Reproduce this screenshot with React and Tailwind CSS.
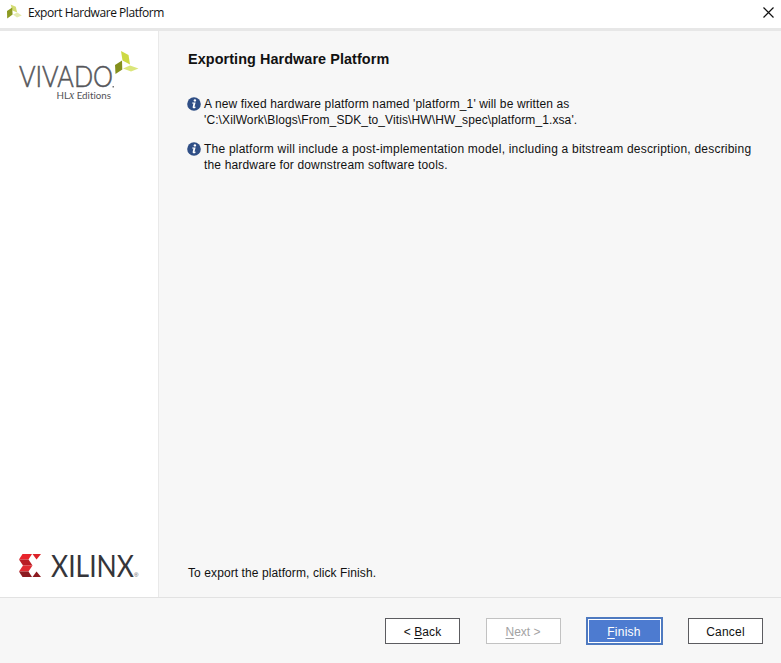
function Leaves({ className }) {
  return (
    <svg className={className} viewBox="0 0 16 16">
      <path d="M4.6 0.4 L9.8 2.8 L11.2 8.6 L6.4 6.4 Z" fill="#d3dc72" />
      <path d="M1 7 L6.2 3.6 L6.6 10.4 L1.2 14.6 Z" fill="#8c9a22" />
      <path d="M7 10.4 L11.4 8.6 L15.8 11.4 L11 13.6 Z" fill="#e4ebb0" />
    </svg>
  );
}

function VivadoLogo() {
  return (
    <svg className="block h-[68px] w-[158px]" viewBox="0 40 158 68">
      <text x="19" y="87.3" fontSize="29.5" fontWeight="300" textLength="94" lengthAdjust="spacingAndGlyphs" fill="#55565a" stroke="#55565a" strokeWidth="0.55" className="font-['Lato',sans-serif]">VIVADO</text>
      <rect x="112.5" y="86" width="1.5" height="1.5" fill="#77787b" />
      <text x="56.5" y="99" fontSize="9.6" textLength="54.5" lengthAdjust="spacingAndGlyphs" fill="#505155" className="font-['Lato',sans-serif] [font-variant-ligatures:none]">
        HL<tspan fontSize="11.5" fontStyle="italic" className="font-['Liberation_Serif',serif]">x</tspan> Editions
      </text>
      <path d="M121 51 L128.5 55 L130 64.5 L122.5 60.5 Z" fill="#cdd944" />
      <path d="M115 65 L122 60.5 L122.3 69.5 L115.5 74 Z" fill="#84901c" />
      <path d="M123 68.5 L130 65.5 L138.5 68.5 L131 71.5 Z" fill="#dbe67a" />
    </svg>
  );
}

function XilinxLogo() {
  return (
    <svg className="block h-[50px] w-[158px]" viewBox="0 547 158 50">
      <path d="M22.5 554 H32 L28.5 559.5 H19 Z" fill="#e8242c" />
      <path d="M32.5 554 H41 L36.5 559.5 Z" fill="#dc2228" />
      <path d="M19 559.5 H28.5 L32.5 565.5 H23 Z" fill="#b91d24" />
      <path d="M23 565.5 H32.5 L28.5 571.5 H19 Z" fill="#e02a30" />
      <path d="M19 571.5 H28.5 L32 577 H22.5 Z" fill="#8c1a20" />
      <path d="M36.5 571.5 L41 577 H32.5 Z" fill="#8c1a20" />
      <text x="51" y="577" fontSize="31.6" fontWeight="400" textLength="83" lengthAdjust="spacingAndGlyphs" fill="#35353a" className="font-['Lato',sans-serif]">XILINX</text>
      <text x="134" y="577" fontSize="6" fill="#55565a" className="font-['Liberation_Sans',sans-serif]">®</text>
    </svg>
  );
}

function Info({ children }) {
  return (
    <div className="flex gap-[3px]">
      <svg className="mt-px size-[14px] shrink-0" viewBox="0 0 14 14">
        <circle cx="7" cy="7" r="6.8" fill="#304f86" />
        <circle cx="7.9" cy="3.4" r="1.2" fill="#fff" />
        <path d="M5.3 5.5 H8.6 L7.5 9.8 H8.7 L8.3 11 C7 11.5 5.3 11.3 5.7 9.7 L6.4 6.6 H5.1 Z" fill="#fff" />
      </svg>
      <div className="whitespace-nowrap">{children}</div>
    </div>
  );
}

export default function App() {
  return (
    <div className="flex h-[663px] w-[781px] flex-col overflow-hidden bg-[#f7f7f7] font-['Liberation_Sans',Arial,sans-serif] text-[12px] leading-4 text-[#111]">
      <header className="flex h-[31px] shrink-0 items-start border-b-[3px] border-[#e7e7e7] bg-white pl-[6px] pr-[7px]">
        <Leaves className="mt-1 size-4" />
        <span className="ml-[6px] mt-[5px] font-['Open_Sans','Noto_Sans',sans-serif] text-[12px] tracking-[-0.45px]">Export Hardware Platform</span>
        <svg className="ml-auto mt-[7px] size-[11px]" viewBox="0 0 11 11">
          <path d="M0.5 0.5 L10.5 10.5 M10.5 0.5 L0.5 10.5" stroke="#111" strokeWidth="1.2" />
        </svg>
      </header>
      <main className="flex h-[566px] shrink-0">
        <aside className="flex w-[159px] flex-col justify-between border-r border-[#e9e9e9] bg-white pt-[9px]">
          <VivadoLogo />
          <XilinxLogo />
        </aside>
        <section className="flex flex-1 flex-col pl-[28px]">
          <h1 className="ml-px mt-[18px] text-[14.4px] font-bold leading-5 tracking-[0.08px]">Exporting Hardware Platform</h1>
          <div className="mt-[27px] flex flex-col gap-[13px]">
            <Info>
              <div className="tracking-[0.12px]">A new fixed hardware platform named 'platform_1' will be written as</div>
              <div className="tracking-[0.1px]">'C:\XilWork\Blogs\From_SDK_to_Vitis\HW\HW_spec\platform_1.xsa'.</div>
            </Info>
            <Info>
              <div className="tracking-[0.217px]">The platform will include a post-implementation model, including a bitstream description, describing</div>
              <div className="tracking-[0.16px]">the hardware for downstream software tools.</div>
            </Info>
          </div>
          <p className="mb-4 ml-px mt-auto tracking-[0.09px]">To export the platform, click Finish.</p>
        </section>
      </main>
      <footer className="flex flex-1 items-start justify-end border-t border-[#e2e2e2] pr-[18px] pt-[19px]">
        <button className="mt-px h-[26px] w-[75px] border border-[#5c5c60] bg-white pt-px tracking-[0.1px]">&lt; <u className="underline-offset-2">B</u>ack</button>
        <button className="ml-[26px] mt-px h-[26px] w-[75px] border border-[#c2c2c2] bg-white pr-px pt-px text-[#a3a3a3]"><u className="underline-offset-2">N</u>ext &gt;</button>
        <button className="ml-[25px] h-[28px] w-[77px] border-2 border-[#4f7ac0] bg-white p-px text-white">
          <span className="flex h-full items-center justify-center bg-[#4d7bd0] pr-px pt-px tracking-[0.25px]"><u className="underline-offset-2">F</u>inish</span>
        </button>
        <button className="ml-[25px] mt-px h-[26px] w-[75px] border border-[#5c5c60] bg-white pt-px tracking-[0.22px]">Cancel</button>
      </footer>
    </div>
  );
}
